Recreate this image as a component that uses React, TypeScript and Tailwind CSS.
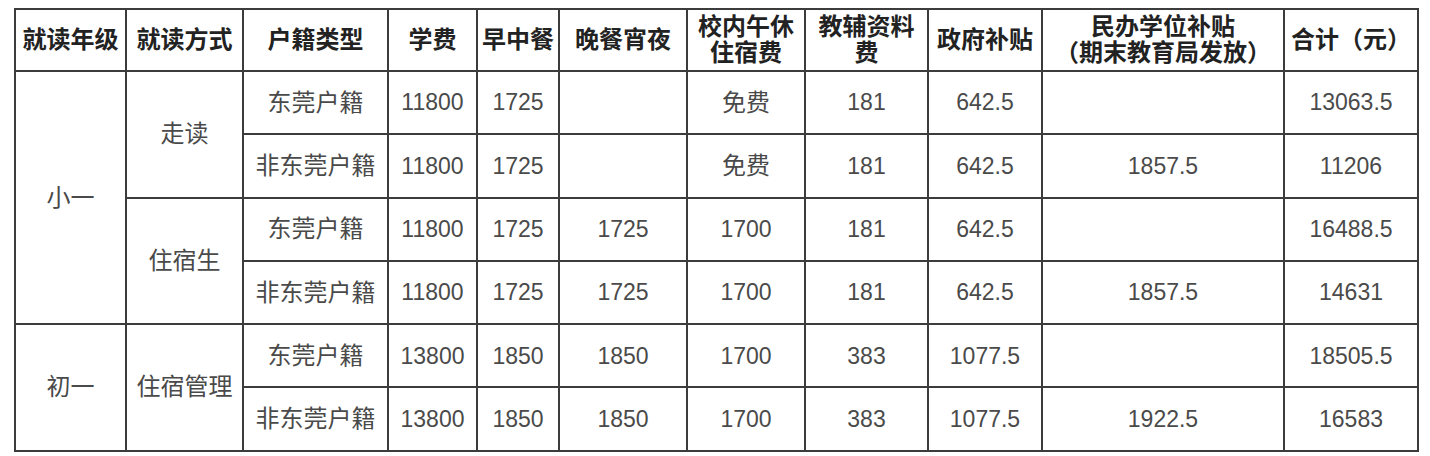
type Row = {
  grade?: { label: string; span: number };
  mode?: { label: string; span: number };
  hukou: string;
  tuition: string;
  meals: string;
  dinner: string;
  lodging: string;
  books: string;
  gov: string;
  subsidy: string;
  total: string;
};

const rows: Row[] = [
  { grade: { label: "小一", span: 4 }, mode: { label: "走读", span: 2 }, hukou: "东莞户籍", tuition: "11800", meals: "1725", dinner: "", lodging: "免费", books: "181", gov: "642.5", subsidy: "", total: "13063.5" },
  { hukou: "非东莞户籍", tuition: "11800", meals: "1725", dinner: "", lodging: "免费", books: "181", gov: "642.5", subsidy: "1857.5", total: "11206" },
  { mode: { label: "住宿生", span: 2 }, hukou: "东莞户籍", tuition: "11800", meals: "1725", dinner: "1725", lodging: "1700", books: "181", gov: "642.5", subsidy: "", total: "16488.5" },
  { hukou: "非东莞户籍", tuition: "11800", meals: "1725", dinner: "1725", lodging: "1700", books: "181", gov: "642.5", subsidy: "1857.5", total: "14631" },
  { grade: { label: "初一", span: 2 }, mode: { label: "住宿管理", span: 2 }, hukou: "东莞户籍", tuition: "13800", meals: "1850", dinner: "1850", lodging: "1700", books: "383", gov: "1077.5", subsidy: "", total: "18505.5" },
  { hukou: "非东莞户籍", tuition: "13800", meals: "1850", dinner: "1850", lodging: "1700", books: "383", gov: "1077.5", subsidy: "1922.5", total: "16583" },
];

const widths = [111, 117, 145, 89, 82, 128, 118, 123, 114, 242, 134];

const th = "border-2 border-[#3c3c3c] p-0 text-center align-middle font-bold text-[#222] text-[24px] leading-[26px]";
const td = "border-2 border-[#3c3c3c] p-0 text-center align-middle text-[#4a4a4a] font-normal";
// Chinese labels sit a touch bigger than the digits in the source sheet
const cjk = "text-[24px]";

export default function App() {
  return (
    <div
      className="w-[1430px] h-[456px] bg-white pt-[8px] pl-[14px]"
      style={{ fontFamily: '"Liberation Sans", "Noto Sans CJK SC", sans-serif' }}
    >
      <table className="table-fixed border-collapse w-[1403px] text-[23px] whitespace-nowrap">
        <colgroup>
          {widths.map((w, i) => (
            <col key={i} style={{ width: w }} />
          ))}
        </colgroup>
        <thead>
          <tr className="h-[62px]">
            <th className={th}>就读年级</th>
            <th className={th}>就读方式</th>
            <th className={th}>户籍类型</th>
            <th className={th}>学费</th>
            <th className={th}>早中餐</th>
            <th className={th}>晚餐宵夜</th>
            <th className={th}>
              校内午休
              <br />
              住宿费
            </th>
            <th className={th}>
              教辅资料
              <br />
              费
            </th>
            <th className={th}>政府补贴</th>
            <th className={th}>
              民办学位补贴
              <br />
              （期末教育局发放）
            </th>
            <th className={th}>合计（元）</th>
          </tr>
        </thead>
        <tbody>
          {rows.map((r, i) => (
            <tr key={i} className="h-[63.3px]">
              {r.grade && (
                <td rowSpan={r.grade.span} className={`${td} ${cjk}`}>
                  {r.grade.label}
                </td>
              )}
              {r.mode && (
                <td rowSpan={r.mode.span} className={`${td} ${cjk}`}>
                  {r.mode.label}
                </td>
              )}
              <td className={`${td} ${cjk}`}>{r.hukou}</td>
              <td className={td}>{r.tuition}</td>
              <td className={td}>{r.meals}</td>
              <td className={td}>{r.dinner}</td>
              <td className={`${td} ${r.lodging === "免费" ? cjk : ""}`}>{r.lodging}</td>
              <td className={td}>{r.books}</td>
              <td className={td}>{r.gov}</td>
              <td className={td}>{r.subsidy}</td>
              <td className={td}>{r.total}</td>
            </tr>
          ))}
        </tbody>
      </table>
    </div>
  );
}
